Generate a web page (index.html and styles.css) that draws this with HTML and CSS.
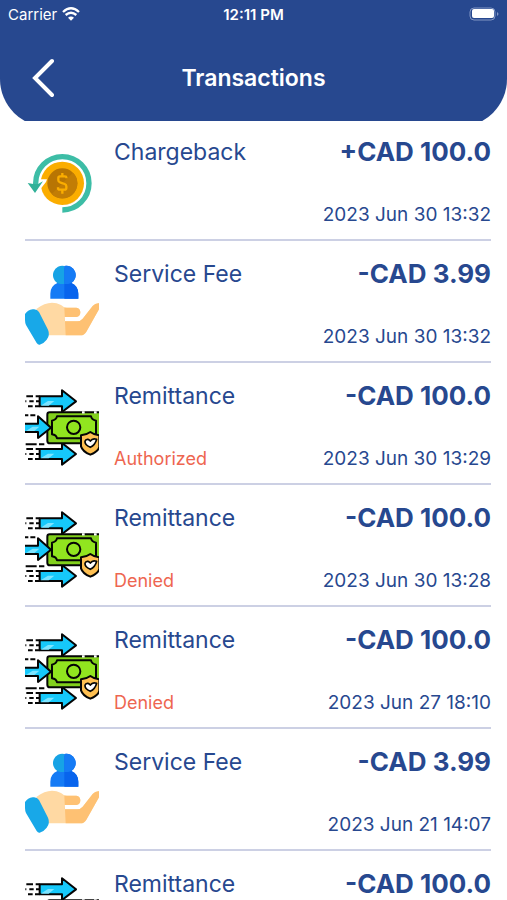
FILE: index.html
```html
<!DOCTYPE html>
<html lang="en">
<head>
    <meta charset="UTF-8">
    <meta name="viewport" content="width=device-width, initial-scale=1.0">
    <title>Transactions</title>
    <link rel="stylesheet" href="styles.css">
</head>
<body>
    <!-- Icons used by the list -->
    <svg class="sprite" aria-hidden="true">
        <symbol id="icon-chargeback" viewBox="30 9 222 240">
            <circle cx="142" cy="130" r="65" fill="#fbad00"/>
            <path d="M142 65a65 65 0 0 0-65 65 65 65 0 0 0 65 65 65 65 0 0 0 46-19A65 65 0 0 1 96 84a65 65 0 0 1 46-19z" fill="#eb9a08"/>
            <circle cx="142" cy="130" r="45" fill="#b87503"/>
            <path d="M174 98a45 45 0 0 1-64 64z" fill="#c27d05"/>
            <path d="M154 115v-3q0-3-4-3h-15q-5 0-5 5v7q0 5 5 6l14 5q5 2 5 7v5q0 5-5 5h-15q-5 0-5-5v-2M142 99v10M142 152v9" fill="none" stroke="#fbad00" stroke-width="7"/>
            <path d="M38 118h58l-3 8-33 42z" fill="#fff"/>
            <path d="M142 210a80 80 0 1 0-80-80v4" fill="none" stroke="#3dbda6" stroke-width="16"/>
            <path d="M38 129l17 3h14l15-8-24 35z" fill="#30b198"/>
        </symbol>
        <symbol id="icon-fee" viewBox="30 30 222 240">
            <path d="M106 131v-15q0-23 21-32a28 28 0 1 1 42 0q21 9 21 32v15z" fill="#157bf5"/>
            <path d="M148 33a28 28 0 0 1 21 51q21 9 21 32v15h-42z" fill="#0864ed"/>
            <path d="M148 33a28 28 0 0 0-21 51l8 3h13z" fill="#17a3e5"/>
            <path d="M148 33a28 28 0 0 1 21 51l-9 3h-12z" fill="#157bf5"/>
            <path d="M64 162q25-19 47-19 14 0 27 7 8 8 18 8h28q12 2 12 14t-12 14h-36v13h39q9 0 16-8l30-38q8-9 19-8v18l-38 67q-6 11-18 11H101z" fill="#ffd9a3"/>
            <path d="M148 158h36q12 2 12 14t-12 14h-36v13h39q9 0 16-8l30-38q8-9 19-8v18l-38 67q-6 11-18 11h-44z" fill="#fec173"/>
            <path d="M30 177q8-12 23-14 13-2 19 8l27 53q7 16-4 30-8 11-21 15-5 1-9-5L33 210q-3-7-3-15z" fill="#18a8e8"/>
        </symbol>
        <symbol id="icon-remittance" viewBox="30 21 222 240">
            <g stroke="#050505" stroke-width="6" stroke-linejoin="round">
                <g id="fast-arrow">
                    <path d="M74 49h67V31l42 33-42 32V79H74z" fill="#16c8fa"/>
                    <path d="M77 77l22-14h19l-17 14z" fill="#7ce4ff" stroke="none"/>
                    <path d="M34 49h20M62 49h12M43 64h13M63 64h12M31 64h3M39 79h14M60 79h14" fill="none"/>
                </g>
                <use href="#fast-arrow" y="158"/>
                <path d="M32 193h33M72 193h16" fill="none"/>
                <path d="M256 97H104q-7 0-7 7v78q0 8 8 8h151z" fill="#82d01c"/>
                <path d="M126 109h102q2 10 15 13v41q-13 3-15 12H126q-2-10-15-12v-41q13-3 15-13z" fill="#91e51f"/>
                <path d="M201 97h8M237 97h8" stroke="#fff" stroke-width="7"/>
                <circle cx="176" cy="142" r="20" fill="#91e51f"/>
                <path d="M28 131h41v-22l39 34-39 31v-18H28" fill="#16c8fa"/>
                <path d="M33 153l20-13h20l-15 13z" fill="#7ce4ff" stroke="none"/>
                <path d="M30 106h10M46 106h15" fill="none"/>
                <path d="M226 156q12 9 27 10v35q-4 14-27 23-23-9-28-25v-33q16-1 28-10z" fill="#ffc052"/>
                <path d="M226 202q-17-8-16-18 2-7 9-6 4 1 7 5 7-10 19-5-5 18-19 24z" fill="#fff" stroke-width="5"/>
            </g>
        </symbol>
    </svg>

    <div class="screen">
        <div class="header-clip">
            <header class="header">
                <div class="status-bar">
                    <div class="carrier">
                        Carrier
                        <svg class="wifi" viewBox="0 0 54 42" aria-hidden="true">
                            <path d="M3 15q24-22 48 0M11 24q16-14 32 0" fill="none" stroke="#fff" stroke-width="7"/>
                            <path d="M27 41l-9-9q9-7 18 0z" fill="#fff"/>
                        </svg>
                    </div>
                    <div class="time">12:11 PM</div>
                    <svg class="battery" viewBox="0 0 30 14" aria-hidden="true">
                        <rect x="1" y="1" width="25" height="12" rx="4" fill="none" stroke="#8296c4"/>
                        <rect x="3" y="2" width="22" height="9" rx="2" fill="#fff"/>
                        <path d="M28 5q3 2 0 4z" fill="#8296c4"/>
                    </svg>
                </div>
                <div class="nav">
                    <button class="back" type="button" aria-label="Back">
                        <svg viewBox="0 0 22 38" aria-hidden="true">
                            <path d="M20 2L3 19l17 17" fill="none" stroke="#fff" stroke-width="4" stroke-linecap="round"/>
                        </svg>
                    </button>
                    <h1>Transactions</h1>
                </div>
            </header>
        </div>

        <ul class="list">
            <li class="item">
                <svg class="icon" aria-hidden="true"><use href="#icon-chargeback"/></svg>
                <div class="info">
                    <div class="line"><span class="name">Chargeback</span><span class="amount">+CAD 100.0</span></div>
                    <div class="line"><span class="status"></span><time>2023 Jun 30 13:32</time></div>
                </div>
            </li>
            <li class="item">
                <svg class="icon" aria-hidden="true"><use href="#icon-fee"/></svg>
                <div class="info">
                    <div class="line"><span class="name">Service Fee</span><span class="amount">-CAD 3.99</span></div>
                    <div class="line"><span class="status"></span><time>2023 Jun 30 13:32</time></div>
                </div>
            </li>
            <li class="item">
                <svg class="icon" aria-hidden="true"><use href="#icon-remittance"/></svg>
                <div class="info">
                    <div class="line"><span class="name">Remittance</span><span class="amount">-CAD 100.0</span></div>
                    <div class="line"><span class="status">Authorized</span><time>2023 Jun 30 13:29</time></div>
                </div>
            </li>
            <li class="item">
                <svg class="icon" aria-hidden="true"><use href="#icon-remittance"/></svg>
                <div class="info">
                    <div class="line"><span class="name">Remittance</span><span class="amount">-CAD 100.0</span></div>
                    <div class="line"><span class="status">Denied</span><time>2023 Jun 30 13:28</time></div>
                </div>
            </li>
            <li class="item">
                <svg class="icon" aria-hidden="true"><use href="#icon-remittance"/></svg>
                <div class="info">
                    <div class="line"><span class="name">Remittance</span><span class="amount">-CAD 100.0</span></div>
                    <div class="line"><span class="status">Denied</span><time>2023 Jun 27 18:10</time></div>
                </div>
            </li>
            <li class="item">
                <svg class="icon" aria-hidden="true"><use href="#icon-fee"/></svg>
                <div class="info">
                    <div class="line"><span class="name">Service Fee</span><span class="amount">-CAD 3.99</span></div>
                    <div class="line"><span class="status"></span><time>2023 Jun 21 14:07</time></div>
                </div>
            </li>
            <li class="item">
                <svg class="icon" aria-hidden="true"><use href="#icon-remittance"/></svg>
                <div class="info">
                    <div class="line"><span class="name">Remittance</span><span class="amount">-CAD 100.0</span></div>
                </div>
            </li>
        </ul>
    </div>
</body>
</html>
```
FILE: styles.css
```css
* {
    box-sizing: border-box;
}
body {
    margin: 0;
    background: #fff;
    color: #27488f;
    font-family: Inter, "Liberation Sans", sans-serif;
}
.sprite {
    position: absolute;
    width: 0;
    height: 0;
}
.screen {
    display: flex;
    flex-direction: column;
    height: 100vh;
    overflow: hidden;
}

/* The rounded bottom is cut off just before the curve ends */
.header-clip {
    flex-shrink: 0;
    overflow: hidden;
}
.header {
    margin-bottom: -6px;
    padding-bottom: 23px;
    background: #27488f;
    border-radius: 0 0 48px 48px;
    color: #fff;
}
.status-bar {
    display: grid;
    grid-template-columns: 1fr auto 1fr;
    align-items: center;
    height: 28px;
    padding: 0 8px;
    font-size: 15px;
}
.carrier {
    display: flex;
    align-items: center;
    gap: 5px;
}
.wifi {
    width: 18px;
    height: 14px;
}
.time {
    font-weight: 600;
}
.battery {
    width: 30px;
    height: 14px;
    justify-self: end;
}
.nav {
    display: grid;
    grid-template-columns: 40px 1fr 40px;
    align-items: center;
    padding: 24px 24px 0;
}
.back {
    display: flex;
    padding: 6px 8px;
    border: 0;
    background: none;
    cursor: pointer;
}
.back svg {
    width: 22px;
    height: 40px;
}
.nav h1 {
    margin: 0;
    font-size: 23px;
    font-weight: 600;
    text-align: center;
}

.list {
    flex: 1;
    min-height: 0;
    margin: -2px 0 0;
    padding: 0 16px 0 25px;
    list-style: none;
}
.item {
    display: flex;
    gap: 15px;
    padding: 18px 0 9px;
    border-bottom: 2px solid #ccd0e4;
}
.icon {
    flex-shrink: 0;
    width: 74px;
    height: 80px;
    margin-top: 6px;
}
.info {
    flex: 1;
    display: flex;
    flex-direction: column;
    justify-content: space-between;
    min-height: 93px;
}
.line {
    display: flex;
    justify-content: space-between;
    line-height: 30px;
}
.name {
    font-size: 23px;
}
.amount {
    font-size: 26px;
    font-weight: 700;
}
.status {
    font-size: 18px;
    color: #ee6650;
}
time {
    font-size: 19px;
}
```
